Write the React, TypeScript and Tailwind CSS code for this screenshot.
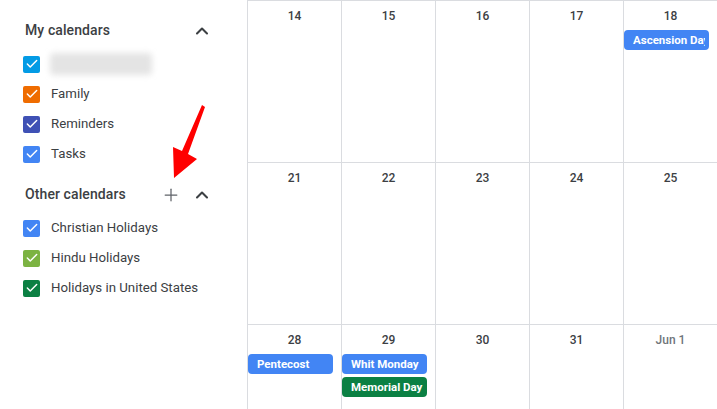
import { Check, ChevronUp, Plus } from "lucide-react";

type Cal = { name: string; color: string; blurred?: boolean };

const myCalendars: Cal[] = [
  { name: "", color: "bg-[#039be5]", blurred: true },
  { name: "Family", color: "bg-[#ef6c00]" },
  { name: "Reminders", color: "bg-[#3f51b5]" },
  { name: "Tasks", color: "bg-[#4285f4]" },
];

const otherCalendars: Cal[] = [
  { name: "Christian Holidays", color: "bg-[#4285f4]" },
  { name: "Hindu Holidays", color: "bg-[#7cb342]" },
  { name: "Holidays in United States", color: "bg-[#0b8043]" },
];

type Ev = { title: string; color: string };

const weeks: { label: string; muted?: boolean; events?: Ev[] }[][] = [
  [
    { label: "14" },
    { label: "15" },
    { label: "16" },
    { label: "17" },
    { label: "18", events: [{ title: "Ascension Day", color: "bg-[#4285f4]" }] },
  ],
  [{ label: "21" }, { label: "22" }, { label: "23" }, { label: "24" }, { label: "25" }],
  [
    { label: "28", events: [{ title: "Pentecost", color: "bg-[#4285f4]" }] },
    {
      label: "29",
      events: [
        { title: "Whit Monday", color: "bg-[#4285f4]" },
        { title: "Memorial Day", color: "bg-[#0b8043]" },
      ],
    },
    { label: "30" },
    { label: "31" },
    { label: "Jun 1", muted: true },
  ],
];

function CalRow({ cal }: { cal: Cal }) {
  return (
    <div className="flex h-[30px] items-center pl-[23px]">
      <div
        className={`flex h-[17px] w-[17px] shrink-0 items-center justify-center rounded-[2px] ${cal.color}`}
      >
        <Check size={14} strokeWidth={2.5} color="white" />
      </div>
      {cal.blurred ? (
        <div className="ml-[10px] h-[22px] w-[102px] rounded bg-[#e4e4e4] blur-[3px]" />
      ) : (
        <span className="ml-[11px] text-[13.25px] text-[#3c4043]">{cal.name}</span>
      )}
    </div>
  );
}

export default function App() {
  return (
    <div
      className="relative flex h-[409px] w-[717px] overflow-hidden bg-white"
      style={{ fontFamily: "Roboto, 'Liberation Sans', sans-serif" }}
    >
      <aside className="w-[247px] shrink-0">
        <div className="mt-[12px] flex h-[37px] items-center justify-between pl-[25px] pr-[35px]">
          <span className="text-[14px] font-medium tracking-[0.1px] text-[#3c4043]">
            My calendars
          </span>
          <ChevronUp size={20} strokeWidth={2.5} color="#3c4043" />
        </div>
        {myCalendars.map((c, i) => (
          <CalRow key={i} cal={c} />
        ))}
        <div className="mt-[7px] flex h-[37px] items-center pl-[25px] pr-[35px]">
          <span className="text-[14px] font-medium tracking-[0.1px] text-[#3c4043]">
            Other calendars
          </span>
          <div className="ml-auto flex items-center gap-[11px]">
            <Plus size={20} strokeWidth={1.5} color="#5f6368" />
            <ChevronUp size={20} strokeWidth={2.5} color="#3c4043" />
          </div>
        </div>
        {otherCalendars.map((c) => (
          <CalRow key={c.name} cal={c} />
        ))}
      </aside>

      <main className="flex flex-1 flex-col">
        {weeks.map((week, wi) => (
          <div key={wi} className="grid h-[162px] shrink-0 grid-cols-5 border-t border-[#dadce0]">
            {week.map((day) => (
              <div key={day.label} className="min-w-0 border-l border-[#dadce0]">
                <div
                  className={`flex h-[29px] items-center justify-center text-[12px] font-medium ${
                    day.muted ? "text-[#70757a]" : "text-[#3c4043]"
                  }`}
                >
                  {day.label}
                </div>
                <div className="flex flex-col gap-[3px] pr-[8px]">
                  {day.events?.map((ev) => (
                    <div
                      key={ev.title}
                      className={`h-[20px] rounded-[4px] pl-[9px] pr-[4px] ${ev.color}`}
                    >
                      <div className="overflow-hidden whitespace-nowrap text-[11.5px] font-bold leading-[20px] text-white">
                        {ev.title}
                      </div>
                    </div>
                  ))}
                </div>
              </div>
            ))}
          </div>
        ))}
      </main>

      <svg className="absolute left-0 top-0" width="247" height="200" viewBox="0 0 247 200">
        <polygon
          points="202,105 205,107 188,154 197,159 174,178 173,147 182,151"
          fill="#ff0000"
        />
      </svg>
    </div>
  );
}
